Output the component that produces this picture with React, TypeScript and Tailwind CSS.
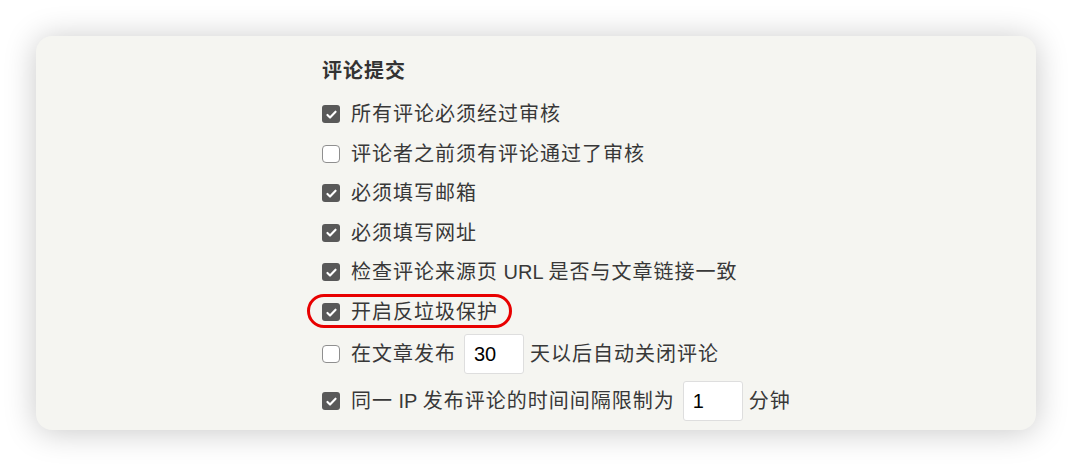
import React from 'react';

const Check = ({ checked }: { checked: boolean }) =>
  checked ? (
    <span className="flex h-[18px] w-[18px] shrink-0 items-center justify-center rounded-[3px] bg-[#595959]">
      <svg viewBox="0 0 16 16" className="h-[13px] w-[13px]" fill="none">
        <path d="M3 8.5l3.2 3.2L13 4.6" stroke="#fff" strokeWidth="2.6" strokeLinecap="round" strokeLinejoin="round" />
      </svg>
    </span>
  ) : (
    <span className="block h-[18px] w-[18px] shrink-0 rounded-[4px] border border-[#8f8f8f] bg-white" />
  );

const Row = ({ checked, children, className = '' }: { checked: boolean; children: React.ReactNode; className?: string }) => (
  <div className={`relative flex min-h-8 items-center gap-[11px] ${className}`}>
    <Check checked={checked} />
    <div className="flex items-center whitespace-pre">{children}</div>
  </div>
);

const NumBox = ({ value }: { value: string }) => (
  <div className="ml-2 mr-[6px] flex h-10 w-[60px] items-center rounded-[3px] border border-[#dedede] bg-white pl-[9px] text-[20px] tracking-normal text-black">
    {value}
  </div>
);

export default function App() {
  return (
    <div className="min-h-screen bg-white p-9 font-['Liberation_Sans','Noto_Sans_CJK_SC',sans-serif]">
      <div className="h-[394px] w-[1000px] overflow-hidden rounded-2xl bg-[#f5f5f1] pl-[286px] pt-[19px] shadow-[0_2px_32px_rgba(0,0,0,0.22)]">
        <div className="flex flex-col gap-[7.6px] text-[20px] leading-8 tracking-[1px] text-[#383838]">
          <h2 className="mb-[3.5px] font-bold text-[#333]">评论提交</h2>
          <Row checked>所有评论必须经过审核</Row>
          <Row checked={false}>评论者之前须有评论通过了审核</Row>
          <Row checked>必须填写邮箱</Row>
          <Row checked>必须填写网址</Row>
          <Row checked>
            检查评论来源页<span className="tracking-normal"> URL </span>是否与文章链接一致
          </Row>
          <Row checked>
            开启反垃圾保护
            <span className="absolute left-[-15px] top-[-2px] h-[34px] w-[205px] rounded-full border-[3px] border-[#e80000]" />
          </Row>
          <Row checked={false} className="-mt-[2px]">
            在文章发布
            <NumBox value="30" />
            天以后自动关闭评论
          </Row>
          <Row checked>
            同一<span className="tracking-normal"> IP </span>发布评论的时间间隔限制为
            <NumBox value="1" />
            分钟
          </Row>
        </div>
      </div>
    </div>
  );
}
